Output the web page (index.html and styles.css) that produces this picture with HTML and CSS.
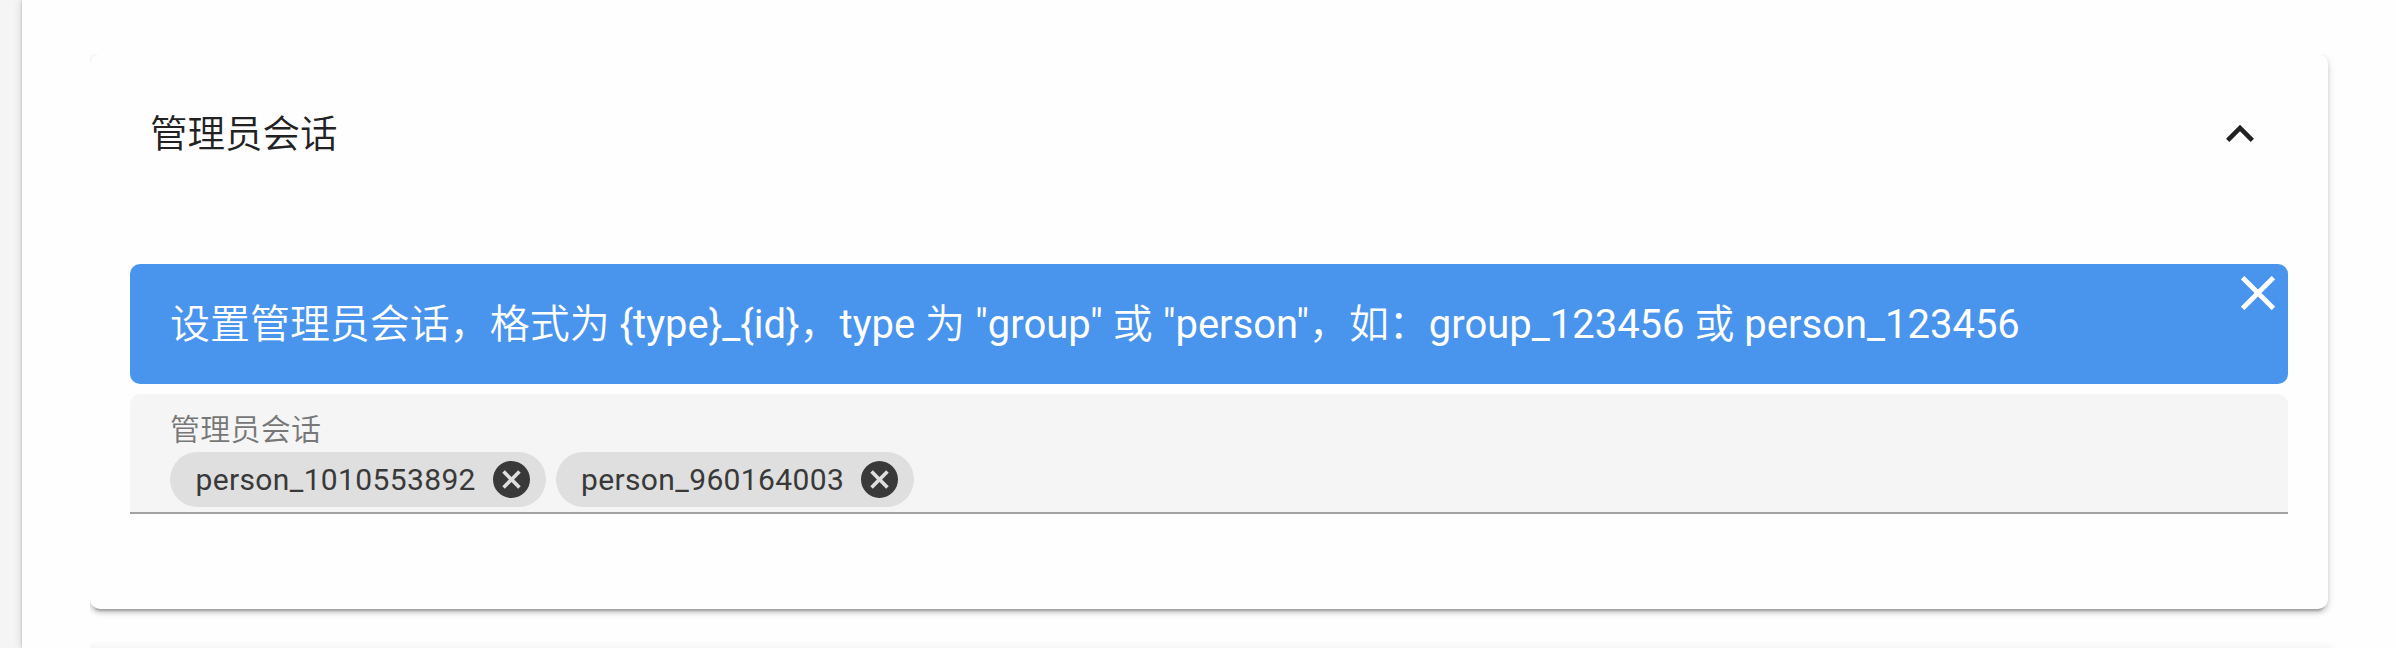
FILE: index.html
```html
<!DOCTYPE html>
<html lang="zh-CN">
<head>
<meta charset="utf-8">
<title>管理员会话</title>
<link rel="stylesheet" href="styles.css">
</head>
<body>
<main class="sheet">
  <div class="panels previous"><section class="panel"></section></div>
  <div class="panels current">
    <section class="panel">
      <header class="panel-title">
        <span class="title-text">管理员会话</span>
        <svg class="chevron" viewBox="0 0 24 24"><path d="M7.41 15.41 12 10.83l4.59 4.58L18 14l-6-6-6 6z"/></svg>
      </header>
      <div class="panel-body">
        <div class="notice">
          <span class="notice-text">设置管理员会话，格式为 {type}_{id}，type 为 "group" 或 "person"，如：group_123456 或 person_123456</span>
          <svg class="close" viewBox="0 0 34 34"><path d="M1.6 1.6 32.4 32.4M32.4 1.6 1.6 32.4"/></svg>
        </div>
        <div class="field">
          <label class="field-label">管理员会话</label>
          <div class="chips">
            <span class="chip"><span class="chip-text">person_1010553892</span><svg class="remove" viewBox="2 2 20 20"><path d="M12 2C6.47 2 2 6.47 2 12s4.47 10 10 10 10-4.47 10-10S17.53 2 12 2m5 13.59L15.59 17 12 13.41 8.41 17 7 15.59 10.59 12 7 8.41 8.41 7 12 10.59 15.59 7 17 8.41 13.41 12z"/></svg></span>
            <span class="chip"><span class="chip-text">person_960164003</span><svg class="remove" viewBox="2 2 20 20"><path d="M12 2C6.47 2 2 6.47 2 12s4.47 10 10 10 10-4.47 10-10S17.53 2 12 2m5 13.59L15.59 17 12 13.41 8.41 17 7 15.59 10.59 12 7 8.41 8.41 7 12 10.59 15.59 7 17 8.41 13.41 12z"/></svg></span>
          </div>
        </div>
      </div>
    </section>
  </div>
  <div class="panels next"><section class="panel"></section></div>
</main>
</body>
</html>
```
FILE: styles.css
```css
* { box-sizing: border-box; }
html, body { height: 100%; }
body {
  margin: 0;
  padding-left: 22px;
  overflow: hidden;
  background: #f5f5f5;
  color: #222;
  font-family: Roboto, "Noto Sans CJK SC DemiLight", "Noto Sans CJK SC", sans-serif;
}
.sheet {
  height: 648px;
  padding: 0 68px;
  background: #fefefe;
  box-shadow: 0 0 3px rgba(0,0,0,.22), 0 0 10px rgba(0,0,0,.12);
}
/* Shadows stop at the left and top edges of each group. */
.panels { display: flow-root; clip-path: inset(0 -40px -40px 0); }
.panel {
  background: #fefefe;
  border-radius: 10px;
  box-shadow: 0 6px 2px -4px rgba(0,0,0,.2), 0 4px 4px rgba(0,0,0,.14), 0 2px 10px rgba(0,0,0,.12);
}
.previous { height: 54px; clip-path: inset(0 -40px 0 0); }
.previous .panel { height: 40px; margin-top: -49px; }
.current .panel { height: 555px; }
.next { height: 39px; clip-path: inset(0 -40px 0 0); }
.next .panel { height: 0; border-radius: 0; margin-top: 39px; box-shadow: 0 0 10px rgba(0,0,0,.12), 0 5px 10px 5px rgba(0,0,0,.07); }
.panel-title {
  height: 160px;
  padding: 0 69px 0 60px;
  display: flex;
  align-items: center;
  justify-content: space-between;
  font-size: 37.5px;
}
.title-text { padding-bottom: 8px; }
.chevron { width: 56px; height: 56px; margin-right: -9px; fill: #222; }
.panel-body { padding: 50px 40px 0; }
.notice {
  height: 120px;
  padding: 0 13px 0 40px;
  display: flex;
  align-items: center;
  justify-content: space-between;
  border-radius: 10px;
  background: #4994ec;
  color: #fff;
  font-size: 39.97px;
  white-space: nowrap;
}
.notice-text { padding-bottom: 7px; }
.close { width: 34px; height: 34px; margin-top: 12px; align-self: flex-start; fill: none; stroke: #fff; stroke-width: 4.8; }
.field {
  height: 120px;
  margin-top: 10px;
  padding: 14px 40px 0;
  border-bottom: 2px solid #a3a3a3;
  border-radius: 10px 10px 0 0;
  background: #f5f5f5;
}
.field-label { display: block; height: 44px; line-height: 43px; font-size: 30px; letter-spacing: .27px; color: #777; }
.chips { display: flex; gap: 10px; }
.chip {
  height: 55px;
  padding: 0 16px 0 25.5px;
  display: flex;
  align-items: center;
  gap: 16.7px;
  border-radius: 28px;
  background: #dfdfdf;
  color: #393939;
  font-size: 30px;
  letter-spacing: .36px;
}
.remove { width: 37px; height: 37px; fill: #393939; }
```
